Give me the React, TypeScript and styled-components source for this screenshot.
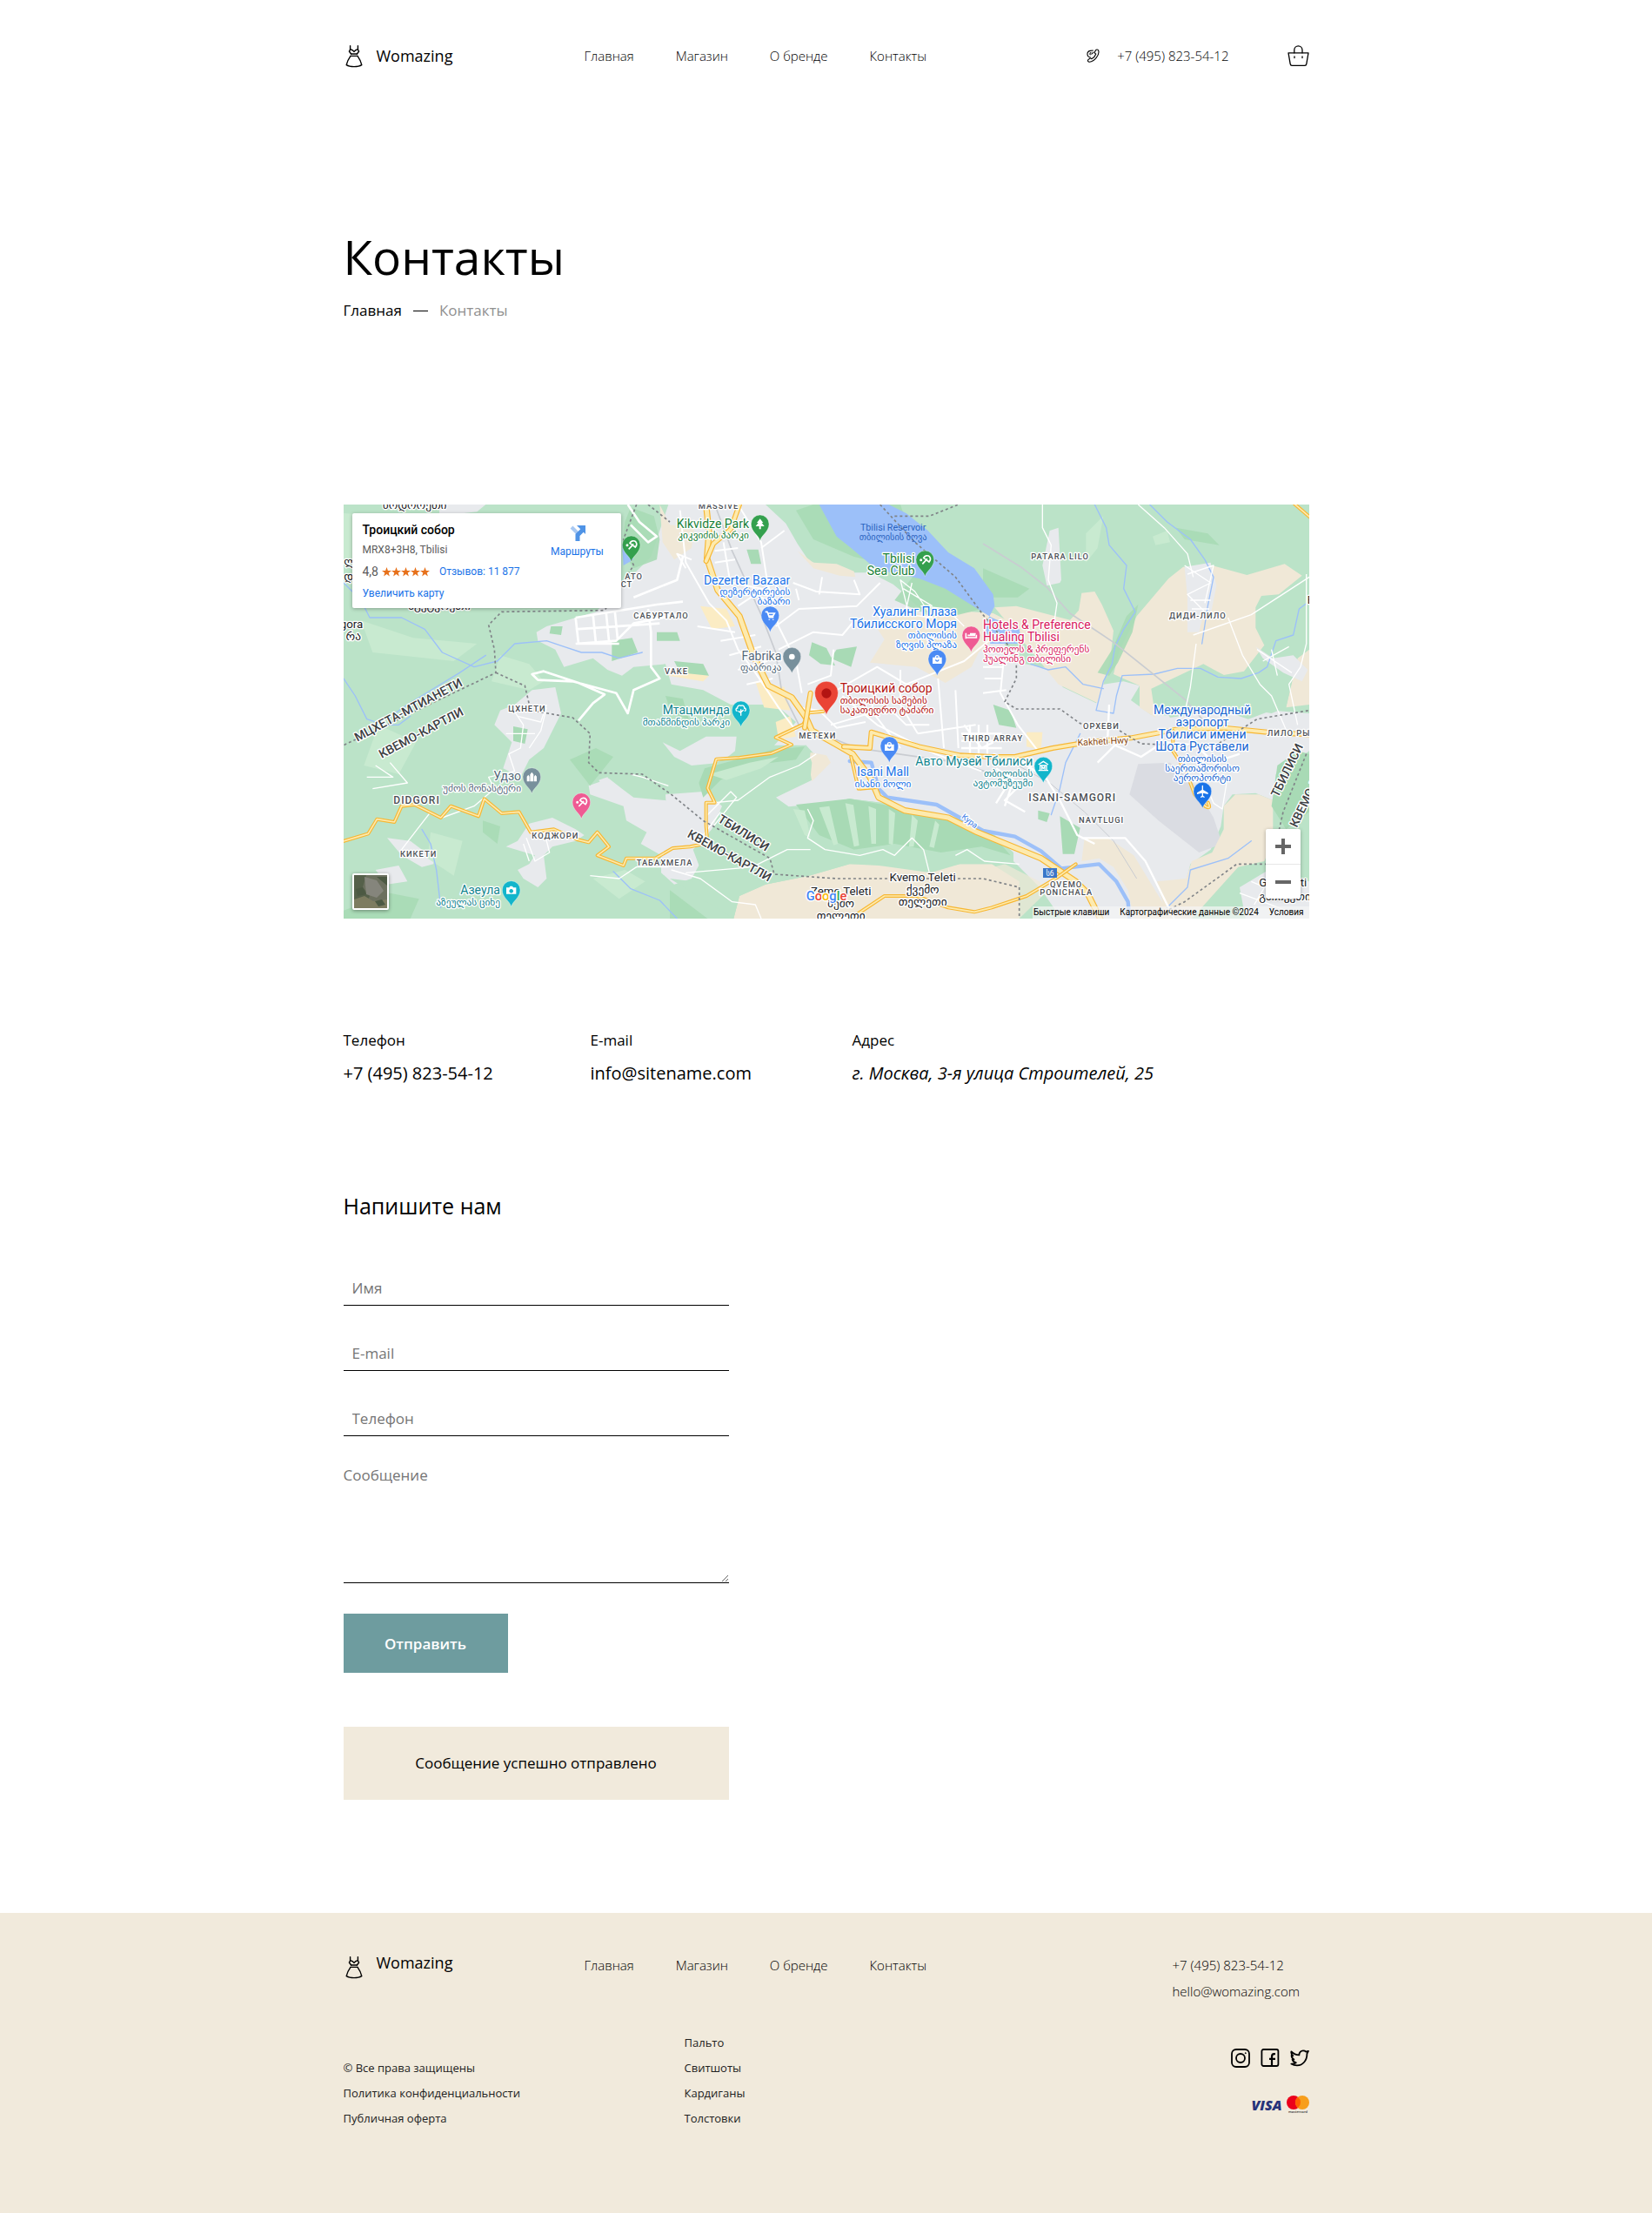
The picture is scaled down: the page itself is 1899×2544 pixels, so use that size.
import React from 'react';
import styled, { createGlobalStyle, css } from 'styled-components';

const color = {
  ink: '#000000',
  muted: '#909090',
  placeholder: '#757575',
  accent: '#6e9c9f',
  sand: '#f1eadc',
  link: '#1a73e8',
};

const sans = "'Open Sans', 'Noto Sans', sans-serif";
const mapFont = "Roboto, 'DejaVu Sans', sans-serif";

const GlobalStyle = createGlobalStyle`
  *, *::before, *::after { box-sizing: border-box; }
  body {
    margin: 0;
    background: #fff;
    color: ${color.ink};
    font-family: ${sans};
    font-size: 17px;
    line-height: 24px;
  }
  a { color: inherit; text-decoration: none; }
  ul, h1, h2, h3, p, dl, dd { margin: 0; padding: 0; list-style: none; font-weight: 400; }
`;

const Container = styled.div`
  width: 100%;
  max-width: 1110px;
  margin: 0 auto;
`;

const VisuallyHidden = styled.label`
  position: absolute;
  width: 1px;
  height: 1px;
  overflow: hidden;
  clip-path: inset(50%);
  white-space: nowrap;
`;

/* ---------- header ---------- */

const HeaderBar = styled.header`
  padding: 50px 0;
`;

const HeaderRow = styled(Container)`
  display: grid;
  grid-template-columns: 277px 1fr auto;
  align-items: center;
`;

const Logo = styled.a<{ $top?: boolean }>`
  display: flex;
  align-items: ${(p) => (p.$top ? 'flex-start' : 'center')};
  gap: 16px;
  font-size: 18px;
  line-height: 18px;
  padding-left: 2px;
`;

const Nav = styled.nav`
  display: flex;
  gap: 48px;
  font-size: 15px;
  line-height: 24px;
  font-weight: 300;
`;

const HeaderSide = styled.div`
  display: flex;
  align-items: center;
  gap: 67px;
`;

const PhoneLink = styled.a`
  display: flex;
  align-items: center;
  gap: 20px;
  font-size: 15px;
  font-weight: 300;
`;

/* ---------- title ---------- */

const PageHead = styled(Container)`
  padding: 135px 0 211px;
`;

const Title = styled.h1`
  font-size: 55px;
  line-height: 64px;
  margin-bottom: 18px;
`;

const Crumbs = styled.nav`
  display: flex;
  align-items: center;
  gap: 13px;
  font-weight: 500;
`;

const CrumbDash = styled.span`
  width: 17px;
  height: 1px;
  background: ${color.ink};
`;

const CrumbCurrent = styled.span`
  color: ${color.muted};
`;

/* ---------- map ---------- */

const MapFrame = styled(Container)`
  position: relative;
  overflow: hidden;
  font-family: ${mapFont};
  font-size: 12px;
  line-height: 16px;
`;

const MapDrawing = styled.svg`
  display: block;
  width: 100%;
  height: auto;
`;

const PlaceCard = styled.div`
  position: absolute;
  left: 10px;
  top: 10px;
  width: 309px;
  height: 109px;
  padding: 10px 12px 8px;
  display: flex;
  justify-content: space-between;
  background: #fff;
  border-radius: 2px;
  box-shadow: 0 1px 4px rgba(0, 0, 0, 0.3);
  color: #5b5b5b;
`;

const PlaceInfo = styled.div`
  display: flex;
  flex-direction: column;
`;

const PlaceName = styled.h3`
  font-size: 14px;
  line-height: 18px;
  font-weight: 500;
  color: #000;
  margin-bottom: 6px;
`;

const Rating = styled.div`
  display: flex;
  align-items: center;
  gap: 4px;
  font-size: 14px;
  margin: 9px 0;
`;

const MapLink = styled.a`
  font-size: 12px;
  color: ${color.link};
`;

const ReviewsLink = styled(MapLink)`
  margin-left: 7px;
`;

const Directions = styled(MapLink)`
  display: flex;
  flex-direction: column;
  align-items: center;
  gap: 4px;
  width: 76px;
  padding-top: 4px;
`;

const ZoomBox = styled.div`
  position: absolute;
  right: 10px;
  bottom: 23px;
  width: 40px;
  background: #fff;
  border-radius: 2px;
  box-shadow: 0 1px 4px rgba(0, 0, 0, 0.3);
`;

const ZoomButton = styled.button`
  display: flex;
  align-items: center;
  justify-content: center;
  width: 100%;
  height: 40px;
  padding: 0;
  border: 0;
  background: none;
  & + & {
    border-top: 1px solid #e6e6e6;
  }
`;

const LayerButton = styled.button`
  position: absolute;
  left: 10px;
  bottom: 10px;
  width: 42px;
  height: 42px;
  padding: 0;
  border: 2px solid #fff;
  border-radius: 2px;
  overflow: hidden;
  background: #5d6350;
  box-shadow: 0 1px 4px rgba(0, 0, 0, 0.4);
`;

const Attribution = styled.div`
  position: absolute;
  right: 0;
  bottom: 0;
  display: flex;
  gap: 12px;
  padding: 0 6px 0 1px;
  background: rgba(245, 245, 245, 0.7);
  font-size: 10px;
  line-height: 14px;
  color: #000;
`;

/* ---------- contacts ---------- */

const ContactList = styled.dl`
  display: grid;
  grid-template-columns: 284px 301px 1fr;
  padding: 128px 0 122px;
`;

const ContactTerm = styled.dt`
  margin-bottom: 12px;
`;

const ContactValue = styled.dd<{ $italic?: boolean }>`
  font-size: 20px;
  line-height: 28px;
  font-style: ${(p) => (p.$italic ? 'italic' : 'normal')};
`;

/* ---------- form ---------- */

const FormTitle = styled.h2`
  font-size: 25px;
  line-height: 32px;
  margin-bottom: 59px;
`;

const FormColumn = styled.div`
  max-width: 443px;
`;

const Form = styled.form`
  display: flex;
  flex-direction: column;
  align-items: flex-start;
  gap: 35px;
`;

const Field = styled.div`
  position: relative;
  width: 100%;
`;

const fieldStyle = css`
  display: block;
  width: 100%;
  border: 0;
  border-bottom: 1px solid ${color.ink};
  border-radius: 0;
  outline: 0;
  background: transparent;
  font-family: inherit;
  font-size: 17px;
  line-height: 20px;
  &::placeholder {
    color: ${color.placeholder};
    opacity: 1;
  }
`;

const TextInput = styled.input`
  ${fieldStyle}
  height: 40px;
  padding: 0 10px;
`;

const TextArea = styled.textarea`
  ${fieldStyle}
  height: 134px;
  padding: 0;
`;

const SubmitButton = styled.button`
  height: 68px;
  width: 189px;
  border: 0;
  background: ${color.accent};
  color: #fff;
  font-family: inherit;
  font-size: 17px;
  font-weight: 600;
`;

const Notice = styled.p`
  margin: 62px 0 130px;
  padding: 30px;
  background: ${color.sand};
  text-align: center;
`;

/* ---------- footer ---------- */

const FooterBar = styled.footer`
  background: ${color.sand};
  padding: 48px 0 99px;
`;

const FooterGrid = styled(Container)`
  display: grid;
  grid-template-columns: 277px 1fr 157px;
  row-gap: 37px;
`;

const FooterContacts = styled.div`
  display: flex;
  flex-direction: column;
  gap: 6px;
  font-size: 15px;
  font-weight: 300;
`;

const SmallLinks = styled.ul<{ $indent?: boolean }>`
  display: flex;
  flex-direction: column;
  justify-content: flex-end;
  gap: 9px;
  padding-left: ${(p) => (p.$indent ? '115px' : '0')};
  font-size: 13px;
  line-height: 20px;
  color: #222;
`;

const FooterSide = styled.div`
  display: flex;
  flex-direction: column;
  align-items: flex-end;
  justify-content: flex-end;
  gap: 32px;
  padding-bottom: 15px;
`;

const IconRow = styled.div<{ $gap: number }>`
  display: flex;
  align-items: center;
  gap: ${(p) => p.$gap}px;
`;

const IconLink = styled.a`
  display: flex;
`;

/* ---------- icons ---------- */

const DressIcon = () => (
  <svg width="20" height="28" viewBox="0 0 20 28" fill="none" stroke="#000" strokeWidth="1.4" strokeLinejoin="round" strokeLinecap="round">
    <path d="M5.6 2.6v4.200L4.400 9l2.200 3M14.400 2.600v4.200L15.600 9l-2.200 3" />
    <path d="M5.600 6.800c2 .2 3.400 1 4.400 2.600 1-1.600 2.400-2.400 4.400-2.600" />
    <path d="M6.600 12h6.800M6 14.400h8" />
    <path d="M6 14.400C4 17.200 2 20.800 1.200 24.600c2.400 1.600 5.400 2 8.800 2s6.400-.4 8.800-2C18 20.800 16 17.200 14 14.400" />
  </svg>
);

const PhoneIcon = () => (
  <svg width="15" height="16" viewBox="0 0 15 16" fill="none" stroke="#000" strokeWidth="1.100" strokeLinejoin="round" strokeLinecap="round">
    <path d="M10.400 1.800c1-1.200 3-1 3.400.6.6 2.400-.4 5.200-2.600 8-2.200 2.800-5 4.600-7.800 4.800-1.800 0-2.600-1.600-1.200-2.800l1.600-1.200c.8-.6 1.600-.2 2 .6 2-1 4.200-3.600 5-5.800-1-.2-1.600-1-1.400-2z" />
    <path d="M4.400 10C2.600 9.800 1.200 8.600 1 6.800.8 4.800 2.200 2.800 4.200 2.400l3.200-.4M4.200 6.800c-.6-.8-.2-2 .8-2.400M8 4.200 5.800 6.200" />
  </svg>
);

const BagIcon = () => (
  <svg width="25" height="25" viewBox="0 0 25 25" fill="none" stroke="#000" strokeWidth="1.3" strokeLinejoin="round" strokeLinecap="round">
    <path d="M1 8.800h23l-2.200 12.800a2 2 0 0 1-2 1.700H5.200a2 2 0 0 1-2-1.700z" />
    <path d="M7.800 8.800V5.400a4.600 4.600 0 0 1 9.200 0v3.400M8 12.800v1.800M17 12.800v1.800" />
  </svg>
);

const InstagramIcon = () => (
  <svg width="22" height="22" viewBox="0 0 22 22" fill="none" stroke="#000" strokeWidth="1.800">
    <rect x="1" y="1" width="20" height="20" rx="5" />
    <circle cx="11" cy="11" r="5" />
    <circle cx="16.800" cy="5.200" r="0.500" strokeWidth="1" fill="#000" />
  </svg>
);

const FacebookIcon = () => (
  <svg width="22" height="22" viewBox="0 0 22 22" fill="none" stroke="#000" strokeWidth="1.800">
    <rect x="1.400" y="1" width="19" height="19" rx="2" />
    <path d="M13 20V9.400c0-2 .8-3.200 2.600-3.200H17M10 11.800h7" strokeWidth="2.200" />
  </svg>
);

const TwitterIcon = () => (
  <svg width="22" height="22" viewBox="0 0 22 22" fill="none" stroke="#000" strokeWidth="1.800" strokeLinejoin="round">
    <path d="M1.400 3.400c2.400 2.600 5.600 4 9 4C10.200 4.600 12.400 2.400 15 2.400c1.400 0 2.400.4 3.200 1.200l2.800-.8-1.600 3c.2 7.800-4.800 13.600-11.400 13.600-2.600 0-4.800-.6-6.600-1.800 2.200 0 4-.4 5.400-1.400-2.400-.6-3.600-1.800-4.200-3.600h1.800C2.400 11.400 1.600 9.800 1.600 8l1.800.4C1.800 7 1 5.200 1.400 3.400z" />
  </svg>
);

const VisaLogo = () => (
  <svg width="38" height="14" viewBox="0 0 38 14">
    <text x="19" y="13" textAnchor="middle" fontFamily={sans} fontSize="16" fontWeight="800" fontStyle="italic" fill="#26337a">VISA</text>
  </svg>
);

const MastercardLogo = () => (
  <svg width="26" height="21" viewBox="0 0 26 21">
    <circle cx="8" cy="8" r="8" fill="#eb001b" />
    <circle cx="18" cy="8" r="8" fill="#f79e1b" />
    <path d="M13 1.800a8 8 0 0 1 0 12.400 8 8 0 0 1 0-12.400z" fill="#ff5f00" />
    <text x="13" y="20" textAnchor="middle" fontFamily={sans} fontSize="4" fontWeight="600" fill="#333">mastercard</text>
  </svg>
);

const DirectionsIcon = () => (
  <svg width="18" height="18" viewBox="0 0 18 18" fill="none">
    <path d="M2 2l7 7" stroke="#a9c9f2" strokeWidth="4" />
    <path d="M9 18V11l6-6" stroke="#4f93e6" strokeWidth="5" />
    <path d="M8 0h10v10z" fill="#4f93e6" />
  </svg>
);

const Stars = () => (
  <svg width="55" height="11" viewBox="0 0 55 11" fill="#e7711b">
    {[0, 11, 22, 33, 44].map((x) => (
      <path key={x} transform={`translate(${x} 0)`} d="M5.500 0l1.400 3.900h4.100L7.700 6.400l1.200 4.100-3.400-2.400-3.400 2.400 1.200-4.100L0 3.900h4.100z" />
    ))}
  </svg>
);

/* ---------- map drawing ---------- */

type Sheet = 'nw' | 'n' | 'ne' | 'sw' | 's' | 'se';

const sheetOrigin: Record<Sheet, string> = {
  nw: 'translate(-15 -15)',
  n: 'translate(1125 -15)',
  ne: 'translate(2205 -15)',
  sw: 'translate(-15 690)',
  s: 'translate(1125 690)',
  se: 'translate(2205 690)',
};

const MapSheet = ({ at, children }: { at: Sheet; children: React.ReactNode }) => (
  <g transform={sheetOrigin[at]}>{children}</g>
);

const Halo = styled.text`
  paint-order: stroke;
  stroke: #fff;
  stroke-width: 8px;
  stroke-linejoin: round;
  font-family: ${mapFont};
`;

const Place = ({ x, y, tint, anchor = 'start', name, local = [] }: {
  x: number; y: number; tint: string; anchor?: 'start' | 'middle' | 'end'; name: string[]; local?: string[];
}) => (
  <g>
    {name.map((t, i) => (
      <Halo key={t} x={x} y={y + i * 42} fill={tint} fontSize="42" textAnchor={anchor}>{t}</Halo>
    ))}
    {local.map((t, i) => (
      <Halo key={t} x={x} y={y + (name.length - 1) * 42 + 38 + i * 33} fill={tint} fontSize="34" textAnchor={anchor}>{t}</Halo>
    ))}
  </g>
);

const District = styled(Halo)<{ $big?: boolean }>`
  font-size: ${(p) => (p.$big ? 36 : 28)}px;
  font-weight: 500;
  letter-spacing: 3px;
  fill: #4c5055;
`;

const Region = styled(Halo)`
  font-size: 42px;
  font-weight: 500;
  fill: #3c4043;
`;

const Village = styled(Halo)`
  font-size: 40px;
  fill: #202124;
`;

type Glyph = 'dot' | 'tree' | 'beach' | 'cart' | 'bag' | 'bed' | 'grove' | 'castle' | 'camera' | 'museum' | 'plane';

const glyphs: Record<Glyph, React.ReactNode> = {
  dot: <circle r="10" fill="#fff" />,
  tree: <path d="M0-19l11 14H6l9 12H3v10h-6V7h-12l9-12h-5z" fill="#fff" />,
  beach: (
    <g fill="none" stroke="#fff" strokeWidth="5">
      <circle cx="-14" cy="0" r="2" />
      <path d="M-9 14L8-4M-5-7C-1-15 9-17 15-12c5 6 4 13-1 19z" />
    </g>
  ),
  cart: <path d="M-17-13h7l7 19h15M-9-8h24l-5 9H-5M-3 12v3M10 12v3" fill="none" stroke="#fff" strokeWidth="5" />,
  bag: <path fillRule="evenodd" d="M-16-6H-8a8 8 0 0 1 16 0h8v22h-32zM-4-6h8a4 4 0 0 0-8 0zM-7 2a7 7 0 0 0 14 0H3a3 3 0 0 1-6 0z" fill="#fff" />,
  bed: <path d="M-18-9v20M-18 7h36M18 9V-3M-12-1h26M-4-6H16" fill="none" stroke="#fff" strokeWidth="5" />,
  grove: <path d="M0 18V-4M0 8l-9-6M0 6l9-8M-12 2a5 5 0 0 1 0-10A8 8 0 0 1 0-16a8 8 0 0 1 12 8 5 5 0 0 1 0 10" fill="none" stroke="#fff" strokeWidth="4" />,
  castle: <path d="M-17 15V-2l5-6 4 6v17zM-6 15V-9l6-8 6 8v24zM8 15V-2l4-6 5 6v17z" fill="#fff" />,
  camera: <path fillRule="evenodd" d="M-17-9h10l3-5h8l3 5h10v22h-34zM0-4a7 7 0 1 0 .1 0z" fill="#fff" />,
  museum: <path d="M-17-6L0-17 17-6M-13-3h26M-11-2v14M11-2v14M-17 14h34M-5 11V1l5 6 5-6v10" fill="none" stroke="#fff" strokeWidth="4" />,
  plane: <path d="M-2-20q2-3 4 0V-6l17 10v5L2 5v9l5 4v3l-7-2-7 2v-3l5-4V5l-17 4V4L-2-6z" fill="#fff" />,
};

const Pin = ({ x, y, tint, glyph, scale = 1 }: { x: number; y: number; tint: string; glyph?: Glyph; scale?: number }) => (
  <g transform={`translate(${x} ${y}) scale(${scale})`}>
    <path d="M0 57C-6 36-31 26-31-1a31 31 0 0 1 62 0C31 26 6 36 0 57z" fill={tint} stroke="#fff" strokeOpacity=".5" strokeWidth="2" />
    {glyph ? glyphs[glyph] : <circle r="13" fill="#b31412" />}
  </g>
);

const Highway = ({ d, w = 12 }: { d: string; w?: number }) => (
  <>
    <path d={d} stroke="#f7b733" strokeWidth={w} />
    <path d={d} stroke="#fdeaae" strokeWidth={w - 7} />
  </>
);

const green = '#188038';
const blue = '#1a73e8';
const teal = '#12858f';
const pink = '#d81b60';
const slate = '#55697a';

const TbilisiMap = () => (
  <MapDrawing viewBox="0 0 3330 1428" role="img" aria-label="Карта: Троицкий собор, Тбилиси">
    <rect width="3330" height="1428" fill="#bbe3c8" />

    {/* city */}
    <path fill="#e8eaed" d="M1120 0L1455 0 1525 65 1565 135 1605 195 1725 235 1815 235 1895 275 1925 300 2050 420 2205 380 2325 545 2455 570 2480 630 2595 685 2620 620 2690 610 2745 625 2715 675 2785 725 2900 730 3000 700 3120 740 3200 710 3330 720 3330 850 3215 930 3205 1020 3145 995 3065 1000 3035 1040 3025 1110 2990 1190 2920 1240 2905 1300 2830 1428 2475 1428 2400 1320 2320 1240 2205 1130 2115 1080 1945 1050 1865 1030 1745 1015 1665 1030 1535 1045 1490 1010 1615 950 1640 880 1595 830 1485 830 1560 750 1490 690 1335 690 1240 640 1130 620 1110 550 1000 560 960 590 910 570 860 530 760 560 730 500 670 470 665 440 700 420 870 370 1000 240 1060 180z" />
    <g fill="#e8eaed">
      <path d="M330 0L490 0 460 25 330 40zM590 690L650 640 730 630 750 720 690 840 640 880 610 940 550 910 580 820 520 760 540 710zM845 970L915 945 960 980 1000 1010 1110 1020 1130 1080 1240 1110 1250 1200 1200 1290 1140 1310 1095 1270 1095 1210 1025 1170 1045 1130 975 1090 965 1040 850 1000zM640 1100L720 1080 800 1120 830 1140 800 1160 720 1180 690 1210 700 1290 670 1320 620 1290 600 1260 640 1240 660 1210 560 1180 600 1160zM150 1150L230 1160 310 1220 310 1240 270 1250 200 1210zM110 1260L190 1245 220 1300 150 1310zM1100 820L1160 850 1250 800 1355 800 1350 850 1300 890 1200 900 1140 870zM1110 1000L1240 990 1320 960 1340 1000 1300 1090 1260 1130 1240 1200 1120 1210zM880 950L910 940 930 970 900 990z" />
    </g>
    <path fill="#dadce2" d="M2740 895l110-5 80 70 70 120 30 90-80 30-140-110-100-90z" />

    {/* farmland */}
    <g fill="#f0e8d7">
      <path d="M2895 215L2845 255 2735 385 2675 505 2655 585 2745 625 2745 700 2800 735 2785 635 2965 550 3035 588 3105 575 3175 485 3145 425 3145 355 3165 315 3225 310 3305 245 3245 205 3115 243 2995 210z" />
      <path d="M2545 305L2590 300 2615 345 2655 435 2645 525 2620 620 2600 685 2465 620 2400 540 2245 355 2320 350 2505 398 2535 365z" />
      <path d="M1565 160L1620 200 1700 205 1760 230 1765 250 1710 245 1620 220zM1975 375L2040 385 2165 370 2240 375 2310 410 2250 460 2190 510 2165 560 2075 615 1975 560 1815 545 1865 465 1825 405z" />
      <path d="M1090 0L1125 70 1210 80 1200 150 1140 190 1100 130zM1610 855L1665 865 1680 890 1615 955 1605 900z" />
      <path d="M3035 1040L3075 1000 3155 1000 3205 1020 3205 1160 3175 1230 3085 1250 2925 1428 2840 1428 2805 1300 2905 1290 2925 1230 2995 1200 3035 1120z" />
      <path d="M2545 1230L2555 1150 2635 1150 2725 1210 2835 1390 2850 1428 2725 1428 2705 1330 2655 1250 2605 1220z" />
      <path d="M1345 1428L1365 1350 1455 1310 1605 1280 1745 1240 1845 1245 2025 1270 2125 1240 2235 1240 2330 1300 2330 1428zM3290 530L3330 500 3330 690 3250 700z" />
      <path d="M2205 1260L2280 1240 2400 1300 2420 1340 2330 1428 2205 1428z" opacity=".7" />
    </g>
    <path fill="#fbecc4" d="M1230 350l90 10 30 60-80 10zM1420 610l100 20 20 80-90-10zM1140 570l120 20-20 20-120-20zM1490 750l50-20 20 70-60 10zM2355 785l55 0-5 60-50-10z" />

    {/* hills south of the city */}
    <path fill="#bbe3c8" d="M1225 970L1240 910 1305 880 1485 840 1595 830 1615 890 1610 940 1490 1010 1535 1042 1665 1030 1745 1015 1865 1030 1945 1050 2125 1085 2235 1130 2310 1200 2310 1240 2125 1240 2025 1262 1825 1240 1745 1240 1605 1280 1455 1310 1365 1350 1345 1428 1125 1290 1205 1300 1235 1270 1205 1190 1265 1130 1305 1040z" />
    <path fill="#a8dab5" d="M1225 960L1245 910 1480 845 1590 835 1560 880 1400 900 1300 950 1240 1010zM1560 1035L1745 1015 1945 1050 2230 1130 2300 1210 2200 1180 2060 1200 1900 1170 1760 1190 1640 1140z" />
    <g fill="#c8ead0">
      <path d="M0 30l160 10 90 90-60 60-190 20zM60 400l180 60 220 20-80 60-280-30zM540 520l100 30 50 60-50 30-130-30zM120 760l130 60-60 110-120-30zM300 1130l110 30-30 120-90-60zM860 1290l110-30 70 40-90 60zM1260 930l140-40 100-20-60 40-120 40zM2560 100l60-60-20 110-40 50zM2790 110l50-20 10 40-50 10z" />
      <path d="M1550 1050l40 90 20 10-20-95zM1640 1045l50 130 15-5-30-130zM1730 1030l30 150 18-4-20-140zM1810 1040l10 130 16 0 0-120zM1880 1050l0 120 14 4 8-110zM1960 1070l-10 110 16 0 14-90zM2040 1090l-20 90 16 4 18-80z" />
    </g>
    <g fill="#a8dab5">
      <path d="M990 10L1070 40 1090 120 1080 190 1000 220 960 160 970 60zM0 1400l160-60 100 20-30 68H0zM780 880l90-40 60 30-80 100zM1125 1330l130 98h-130zM2205 220l160 70-40 30-120 0zM1940 60l-20-60-90 0h-210l-60 20 60 100 140 60 130 30 60-60zM2600 580L2650 500 2700 385 2740 345 2720 440 2670 545 2640 590zM1970 240L2120 270 2200 360 2120 380 1990 370 1900 330zM480 1090l60 20-10 60-50-40zM2870 80l110 20 40 40-120-20z" opacity=".9" />
      <path d="M1615 475l50 20 30 60-50-5-40-30zM1700 500l70-10-20 70-70-30zM1140 540l100 10 20 40-100-10zM1390 155l40 0 10 50-35 0zM1110 660l60 10 20 70-60-20zM715 420l40 0-5 30-40-5zM925 470l70-10 20 50-90 30zM1080 440l70 0 10 30-80 0zM2240 690l60 20 20 60-60-10zM2470 1075l70 40-20 90-40 0zM2395 1055l40 10-10 30-30-10zM585 765l50 10-10 50-40-10z" />
      <path fill="#bbe3c8" d="M2800 650L2965 555 3040 590 3110 580 3175 490 3290 520 3250 700 3200 720 3080 700 2850 735z" />
      <path d="M3220 900L3290 850 3330 860 3330 1060 3250 1120 3200 1040z" />
    </g>
    <path fill="#e8eaed" d="M2435 90L2465 80 2475 260 2470 270 2425 280 2410 210zM2900 215L2990 200 3010 280 2990 380 2960 400 2950 440 2910 440 2910 320zM3145 490L3205 530 3275 520 3325 570 3305 610 3240 580 3170 530zM3090 1320L3190 1260 3330 1300 3330 1428 3110 1428z" />

    {/* water */}
    <path fill="#9cc0f9" d="M1640 0L1700 110 1750 150 1815 205 1885 235 1985 255 2075 290 2235 390 2330 430 2340 480 2230 480 2210 420 2245 350 2240 310 2175 220 2085 165 2015 90 1940 30 1880 0zM960 140L985 110 1000 190 965 210z" />
    <g fill="none" stroke="#9cc0f9" strokeLinejoin="round" strokeLinecap="round">
      <path strokeWidth="13" d="M1745 885l75 5 25 90 30 30 170 25 160 90 110 20 90 50 70 60 130-15 60 60 40 70 5 60" />
      <g strokeWidth="4">
        <path d="M0 270l60 60 30 60 110 0 80 40 60 80 110 50 80-20 60-60 110-10 60 20 60 20 70 0 60 20 80-20M0 600l40 60 40 80 60 20 50 0 40-30M150 740l70-50 180-110 90-60M270 1120l30 50 20 90 15 130" />
        <path d="M2590 0l40 80 10 60 60 70-10 80 40 80-40 60-30 60-10 60-30 60-10 40-15 60 60 10 10-60 20-70 110-5 80-20 80 0 60 30 80 5 60-20 30-20 30-90 60-20 20-90 80-60M2780 0l60 60 80 60 50 70 30 60-20 100-20 130M2370 550l60 20 60-10 60 60 70 15M2540 790l-50 100-20 90-30 90M3130 1160l-80 60-130 40-10 60-70 70M930 1265l60 60 100 40 60 63" />
      </g>
    </g>

    {/* railways */}
    <g fill="none" stroke="#c9ccd1" strokeWidth="5">
      <path d="M1280 0l60 160 100 220 50 130 20 130 60 120 200 80 350 50 150 50M2205 135l130 80 90 70 80 90 150 100 150 120 100 80 60 70" />
      <path d="M2205 870l120 30 110 60 120 100 100 100 80 130" strokeWidth="3" />
    </g>

    {/* streets */}
    <g fill="none" stroke="#fff" strokeWidth="6" strokeLinejoin="round">
      <path d="M800 390l280-45 90-10M800 430l290-20M800 480l140-10 60-60 150-30M860 380l10 100M905 370l10 100M935 365l10 100M980 0l40 60 60 50-30 20-60-60M800 390l10 90 140 0M1000 320l150-60 20-80M1050 360l10 80 0 120 30 40-90 40-20 80-40-70-150-40-120-5-20-20 40-10 120 40 90 40-40 30-50 60" strokeWidth="8" />
      <path d="M1160 20l20 180 80 140 60 60 40 100 60 80 80 120 60 80M1360 0l80 130 20 130 40 160 60 120 20 110M1440 150l80-60M1280 160l80-10M1280 200l70-10M1310 130l20 120M1200 190l-50-20 30 50M1340 270l150 30M1360 350l60-40 60 30M1220 420l130 20M1300 470l120-20M1330 520l110-30M1360 570l100-30M1390 620l90-20" />
      <path d="M1490 420l80-60 200-10 80-80M1550 270l80 30 150 10-20-50M1560 290l10 40M1650 250l-10 60M1500 500l120-60 100 10 50-60M1600 620l80-30 10-90M1700 640l140-80 100 60 200-80 120-100M1560 700l80 10 60 60 100-20M1680 760l200-60 60 60 80 0M1840 620l-20 90 100 130M1920 570l0 120 60 100M1980 790l200-30M2050 600l20 240M2110 640l10 200M1720 660l120 100 200 100 160 60M2205 560h70M2210 600l60 0M2275 550l-10 100 60 110 70 90M2205 650l80-10" />
      <path d="M2140 760l60 80 40-20M2130 790h140M2130 815h140M2130 840h140M2160 760v100M2190 760v100M2220 760v100M2240 860l100 30 80 50 50 80 60 120 60 30M2250 910l60 40-30 90M2300 950l-50 80M2340 960l-60 60 70 40M2640 690l-5 110M2600 890l60-60 90 40 60-40M2840 820l100 10 60 60 90-30M2545 1150l150 0 70 80 100 200" strokeWidth="7" />
      <path d="M580 700l40 60-10 80-40 20 20 60-90 20 20 40-70 60-110 40M700 700l-20 80-40 60M630 1150l30 80 50-30-20-80M640 1230l-20-60M300 1060l-100 130M160 890l60 70-120 20M110 900l60 40-90 0M1300 1060l-60 80 60 60M1120 1250l-110 0-60 40-100-10M1245 1080l90-90 20 20-80 100" strokeWidth="4" />
      <path d="M1120 970l-90-30-40-10M1130 1260l100 30 110 80 80 10 20 48M1260 1030l100-10 110-80 100-40 60-40M1600 1050l20 40-20 60 60 40 120 20 80-20 40 20 60-60 40 40 20 80M1180 1270l230-20 120-60 80 0M2110 1210l40-20 60 40 120 10M2410 0l0 80 30 60-10 120 30 80-10 70M2740 0l90 80 80 90 20 80M2930 450l200-70 200-130M3050 390l50 130 60 100 40 40 60 140M2940 480l-20 150-20 90M3320 240l0 240-20 80-40 60 30 140M2970 960l30 70 30 20 15-90" strokeWidth="4" />
      <path d="M1920 260l50 40 60 90-80-10zM1930 290l100 60M1960 270l-20 90M1990 350l90 10 60 60M2900 210l90 60-80 40 70 70M2910 240l90-30-30 130M2920 330h70M2925 360h60M3150 500l120 80M3170 540l90-50M3200 500l20 90M3090 1340l160 60M3130 1300l140 60M3140 1380l60-100M600 730l80 20 20-60M560 790l100 0" strokeWidth="4" />
    </g>

    {/* trunk roads */}
    <g fill="none" strokeLinejoin="round" strokeLinecap="round">
      <Highway d="M-15 1165l100-30 30-50 60 10 25-55 45-5 90 45 35-40 95 35 20-60 60 50 60-5 40 70 80-10 80 35 40 10 30-35 40 50-40 30 90 35 10-25h100l60-35 60-5 60-12-5-60v-80l30 0-25-50 30-100 80-5 110-15 70-30-55-25 95-45 20-40 50-5" />
      <Highway w={22} d="M1250 0l10 95-7 90 37 110 75 90 50 140 50 100 80 40 50 70 20 45 80 45 60 35 60 80 30 70 60 30 30 15 150 25 100 50 110 45 110 45 120 80 40 40 30 60 30 60" />
      <Highway w={18} d="M1365 0l-30 85-60 50-25 60M1590 770l20-120M1725 835l90 5 5-55 165 50 140 30 110 5h80l130-30 120-20 150-15 160-30 160-5 150 15 175 10" />
      <Highway d="M2860 780v70l45 70 30 80 38 42q20 10 8-14M1775 1410l90-60 110 0 110 40 90 15 60-15 120-40 100-60 70-50M1780 980l60-5M3270-10l70 60M1750 870l25 110" />
    </g>

    {/* borders */}
    <g fill="none" stroke="#808488" strokeWidth="5" strokeDasharray="9 9">
      <path d="M1010 0L965 120 1000 210 900 365 545 370 500 415 520 500 525 580 0 830M525 580L625 625 645 710 790 735 850 790 845 890 880 925 1030 930 1130 1000 1240 1090 1470 1220 1485 1275 1700 1290 2205 1290 2330 1320 2330 1428M1050 0L1125 60M1850 0L1970 130 2110 250 2205 380 2320 520 2320 600 2280 680 2320 705 2470 705 2540 755 2660 770 2750 825 3000 835 3150 740 3330 710M1900 40L2020 40 2120 0M3320 860L3240 1060 3200 1240 3080 1240 2900 1370 2840 1400" />
    </g>

    {/* labels */}
    <MapSheet at="nw">
      <Village x={260} y={30} textAnchor="middle">წოდორეთი</Village>
      <Village x={16} y={225}>ლ.</Village>
      <Village x={16} y={275}>დ</Village>
      <Village x={345} y={378} textAnchor="middle">აგეტკოეთი</Village>
      <Village x={82} y={440} textAnchor="end">gora</Village>
      <Village x={75} y={482} textAnchor="end">რა</Village>
      <District x={985} y={273}>АТО</District>
      <District x={960} y={300}>ІСТ</District>
      <District x={1015} y={408}>САБУРТАЛО</District>
      <District x={1122} y={600}>VAKE</District>
      <District x={583} y={729}>ЦХНЕТИ</District>
      <Pin x={1007} y={155} tint="#34a04e" glyph="beach" />
    </MapSheet>
    <MapSheet at="n">
      <District x={98} y={30}>MASSIVE</District>
      <Place x={273} y={95} tint={green} anchor="end" name={['Kikvidze Park']} local={['კიკვიძის პარკი']} />
      <Pin x={311} y={83} tint="#34a04e" glyph="tree" />
      <Place x={415} y={290} tint={blue} anchor="end" name={['Dezerter Bazaar']} local={['დეზერტირების', 'ბაზარი']} />
      <Pin x={346} y={398} tint="#4a8af4" glyph="cart" />
      <Place x={385} y={551} tint={slate} anchor="end" name={['Fabrika']} local={['ფაბრიკა']} />
      <Pin x={421} y={540} tint="#78909c" glyph="dot" />
      <Halo x={770} y={106} fontSize="32" textAnchor="middle" fill="#2a63c0" strokeOpacity="0">Tbilisi Reservoir</Halo>
      <Halo x={770} y={139} fontSize="31" textAnchor="middle" fill="#2a63c0" strokeOpacity="0">თბილისის ზღვა</Halo>
      <Place x={845} y={216} tint={green} anchor="end" name={['Tbilisi', 'Sea Club']} />
      <Pin x={880} y={206} tint="#34a04e" glyph="beach" />
      <Place x={990} y={398} tint={blue} anchor="end" name={['Хуалинг Плаза', 'Тбилисского Моря']} local={['თბილისის', 'ზღვის პლაზა']} />
      <Pin x={922} y={548} tint="#4a8af4" glyph="bag" />
      <Place x={1080} y={444} tint={pink} name={['Hotels & Preference', 'Hualing Tbilisi']} local={['ჰოთელს & პრეფერენს', 'ჰუალინგ თბილისი']} />
      <Pin x={1039} y={467} tint="#ef5b93" glyph="bed" />
      <Place x={207} y={738} tint={teal} anchor="end" name={['Мтацминда']} local={['მთაწმინდის პარკი']} />
      <Pin x={245} y={725} tint="#12b5cb" glyph="grove" />
      <Place x={587} y={663} tint="#b31412" name={['Троицкий собор']} local={['თბილისის სამების', 'საკათედრო ტაძარი']} />
      <Pin x={540} y={666} tint="#ea4335" scale={1.3} />
    </MapSheet>
    <MapSheet at="ne">
      <District x={166} y={204}>PATARA LILO</District>
      <District x={642} y={408}>ДИДИ-ЛИЛО</District>
      <Village x={1118} y={356}>В</Village>
      <Place x={756} y={738} tint="#1967d2" anchor="middle" name={['Международный', 'аэропорт', 'Тбилиси имени', 'Шота Руставели']} local={['თბილისის', 'საერთაშორისო', 'აეროპორტი']} />
    </MapSheet>
    <MapSheet at="sw">
      <Region transform="translate(62 128) rotate(-28)">МЦХЕТА-МТИАНЕТИ</Region>
      <Region transform="translate(146 186) rotate(-28)">КВЕМО-КАРТЛИ</Region>
      <Place x={627} y={262} tint={slate} anchor="end" name={['Удзо']} local={['უძოს მონასტერი']} />
      <Pin x={664} y={250} tint="#78909c" glyph="castle" />
      <Pin x={835} y={337} tint="#ef5b93" glyph="beach" />
      <District x={187} y={342} $big>DIDGORI</District>
      <District x={664} y={463}>КОДЖОРИ</District>
      <District x={210} y={525}>КИКЕТИ</District>
      <District x={1025} y={556}>ТАБАХМЕЛА</District>
      <Place x={555} y={655} tint={teal} anchor="end" name={['Азеула']} local={['აზეულას ციხე']} />
      <Pin x={593} y={640} tint="#12b5cb" glyph="camera" />
    </MapSheet>
    <MapSheet at="s">
      <District x={445} y={117}>МЕТЕХИ</District>
      <District x={1010} y={126}>THIRD ARRAY</District>
      <Pin x={757} y={143} tint="#4a8af4" glyph="bag" />
      <Place x={735} y={246} tint={blue} anchor="middle" name={['Isani Mall']} local={['ისანი მოლი']} />
      <Place x={1252} y={210} tint={teal} anchor="end" name={['Авто Музей Тбилиси']} local={['თბილისის', 'ავტომუზეუმი']} />
      <Region transform="translate(163 402) rotate(32)">ТБИЛИСИ</Region>
      <Region transform="translate(58 455) rotate(29)">КВЕМО-КАРТЛИ</Region>
      <Halo transform="translate(1004 390) rotate(38)" fontSize="28" fill="#3578e5">Кура</Halo>
      <Village x={872} y={608} textAnchor="middle">Kvemo Teleti</Village>
      <Village x={872} y={650} textAnchor="middle">ქვემო</Village>
      <Village x={872} y={692} textAnchor="middle">თელეთი</Village>
      <Village x={590} y={656} textAnchor="middle">Zemo Teleti</Village>
      <Village x={590} y={698} textAnchor="middle">ზემო</Village>
      <Village x={590} y={740} textAnchor="middle">თელეთი</Village>
      <Halo x={540} y={674} fontSize="44" fontWeight="500" textAnchor="middle">
        <tspan fill="#4285f4">G</tspan><tspan fill="#ea4335">o</tspan><tspan fill="#fbbc04">o</tspan><tspan fill="#4285f4">g</tspan><tspan fill="#34a853">l</tspan><tspan fill="#ea4335">e</tspan>
      </Halo>
    </MapSheet>
    <MapSheet at="se">
      <District x={345} y={84}>ОРХЕВИ</District>
      <Halo transform="translate(326 142) rotate(-3)" fontSize="32" fill="#8a4b12">Kakheti Hwy</Halo>
      <District x={980} y={108}>ЛИЛО РЫН</District>
      <Pin x={208} y={213} tint="#12b5cb" glyph="museum" />
      <District x={157} y={333} $big>ISANI-SAMGORI</District>
      <District x={330} y={408}>NAVTLUGI</District>
      <Pin x={757} y={300} tint="#1a73e8" glyph="plane" />
      <Region transform="translate(1018 322) rotate(-64)">ТБИЛИСИ</Region>
      <Region transform="translate(1082 426) rotate(-64)">КВЕМО-КАРТЛИ</Region>
      <rect x="207" y="564" width="48" height="33" fill="#3a76c8" />
      <text x="231" y="590" fontSize="25" fill="#fff" textAnchor="middle" fontFamily={mapFont}>ს6</text>
      <District x={287} y={630} textAnchor="middle">QVEMO</District>
      <District x={287} y={657} textAnchor="middle">PONICHALA</District>
      <Village x={952} y={628}>Gachiveti</Village>
      <Village x={952} y={676}>გაჩივეთი</Village>
    </MapSheet>
  </MapDrawing>
);

const MapWidget = () => (
  <MapFrame as="section">
    <TbilisiMap />
    <PlaceCard>
      <PlaceInfo>
        <PlaceName>Троицкий собор</PlaceName>
        <p>MRX8+3H8, Tbilisi</p>
        <Rating>
          4,8 <Stars />
          <ReviewsLink href="#reviews">Отзывов: 11 877</ReviewsLink>
        </Rating>
        <MapLink href="#map">Увеличить карту</MapLink>
      </PlaceInfo>
      <Directions href="#route">
        <DirectionsIcon />
        Маршруты
      </Directions>
    </PlaceCard>
    <LayerButton type="button" aria-label="Показать спутниковую карту">
      <svg width="38" height="38" viewBox="0 0 38 38">
        <rect width="38" height="38" fill="#6c705f" />
        <path d="M0 0h14l-4 14 8 10-6 14H0z" fill="#55604a" />
        <path d="M12 2l14 4 8 12-8 8-12-4z" fill="#85857c" />
        <path d="M0 28l12-4 10 6 16-2v10H0z" fill="#7d7c60" />
        <path d="M26 2l12 0v10zM2 16l8-2 4 8-10 2zM24 30l8-2 4 6-8 2z" fill="#4c5943" />
      </svg>
    </LayerButton>
    <ZoomBox>
      <ZoomButton type="button" aria-label="Увеличить">
        <svg width="18" height="18" viewBox="0 0 18 18" stroke="#666" strokeWidth="4"><path d="M0 9h18M9 0v18" /></svg>
      </ZoomButton>
      <ZoomButton type="button" aria-label="Уменьшить">
        <svg width="18" height="18" viewBox="0 0 18 18" stroke="#666" strokeWidth="4"><path d="M0 9h18" /></svg>
      </ZoomButton>
    </ZoomBox>
    <Attribution>
      <span>Быстрые клавиши</span>
      <span>Картографические данные ©2024</span>
      <a href="#terms">Условия</a>
    </Attribution>
  </MapFrame>
);

/* ---------- page ---------- */

const MainNav = () => (
  <Nav>
    <a href="#home">Главная</a>
    <a href="#shop">Магазин</a>
    <a href="#about">О бренде</a>
    <a href="#contacts">Контакты</a>
  </Nav>
);

const phone = '+7 (495) 823-54-12';

const fields = [
  { id: 'name', type: 'text', label: 'Имя' },
  { id: 'email', type: 'email', label: 'E-mail' },
  { id: 'phone', type: 'tel', label: 'Телефон' },
];

export default function App() {
  return (
    <>
      <GlobalStyle />
      <HeaderBar>
        <HeaderRow>
          <Logo href="#home"><DressIcon />Womazing</Logo>
          <MainNav />
          <HeaderSide>
            <PhoneLink href="tel:+74958235412"><PhoneIcon />{phone}</PhoneLink>
            <IconLink href="#cart" aria-label="Корзина"><BagIcon /></IconLink>
          </HeaderSide>
        </HeaderRow>
      </HeaderBar>

      <main>
        <PageHead>
          <Title>Контакты</Title>
          <Crumbs>
            <a href="#home">Главная</a>
            <CrumbDash />
            <CrumbCurrent>Контакты</CrumbCurrent>
          </Crumbs>
        </PageHead>

        <MapWidget />

        <Container>
          <ContactList>
            <div>
              <ContactTerm>Телефон</ContactTerm>
              <ContactValue>{phone}</ContactValue>
            </div>
            <div>
              <ContactTerm>E-mail</ContactTerm>
              <ContactValue>info@sitename.com</ContactValue>
            </div>
            <div>
              <ContactTerm>Адрес</ContactTerm>
              <ContactValue $italic>г. Москва, 3-я улица Строителей, 25</ContactValue>
            </div>
          </ContactList>

          <FormColumn>
            <FormTitle>Напишите нам</FormTitle>
            <Form>
              {fields.map((f) => (
                <Field key={f.id}>
                  <VisuallyHidden htmlFor={f.id}>{f.label}</VisuallyHidden>
                  <TextInput id={f.id} type={f.type} placeholder={f.label} />
                </Field>
              ))}
              <Field>
                <VisuallyHidden htmlFor="message">Сообщение</VisuallyHidden>
                <TextArea id="message" placeholder="Сообщение" />
              </Field>
              <SubmitButton type="button">Отправить</SubmitButton>
            </Form>
            <Notice>Сообщение успешно отправлено</Notice>
          </FormColumn>
        </Container>
      </main>

      <FooterBar>
        <FooterGrid>
          <Logo href="#home" $top><DressIcon />Womazing</Logo>
          <MainNav />
          <FooterContacts>
            <a href="tel:+74958235412">{phone}</a>
            <a href="mailto:hello@womazing.com">hello@womazing.com</a>
          </FooterContacts>
          <SmallLinks>
            <li>© Все права защищены</li>
            <li><a href="#privacy">Политика конфиденциальности</a></li>
            <li><a href="#offer">Публичная оферта</a></li>
          </SmallLinks>
          <SmallLinks $indent>
            <li><a href="#coats">Пальто</a></li>
            <li><a href="#sweatshirts">Свитшоты</a></li>
            <li><a href="#cardigans">Кардиганы</a></li>
            <li><a href="#hoodies">Толстовки</a></li>
          </SmallLinks>
          <FooterSide>
            <IconRow $gap={12}>
              <IconLink href="#instagram" aria-label="Instagram"><InstagramIcon /></IconLink>
              <IconLink href="#facebook" aria-label="Facebook"><FacebookIcon /></IconLink>
              <IconLink href="#twitter" aria-label="Twitter"><TwitterIcon /></IconLink>
            </IconRow>
            <IconRow $gap={4}>
              <VisaLogo />
              <MastercardLogo />
            </IconRow>
          </FooterSide>
        </FooterGrid>
      </FooterBar>
    </>
  );
}
